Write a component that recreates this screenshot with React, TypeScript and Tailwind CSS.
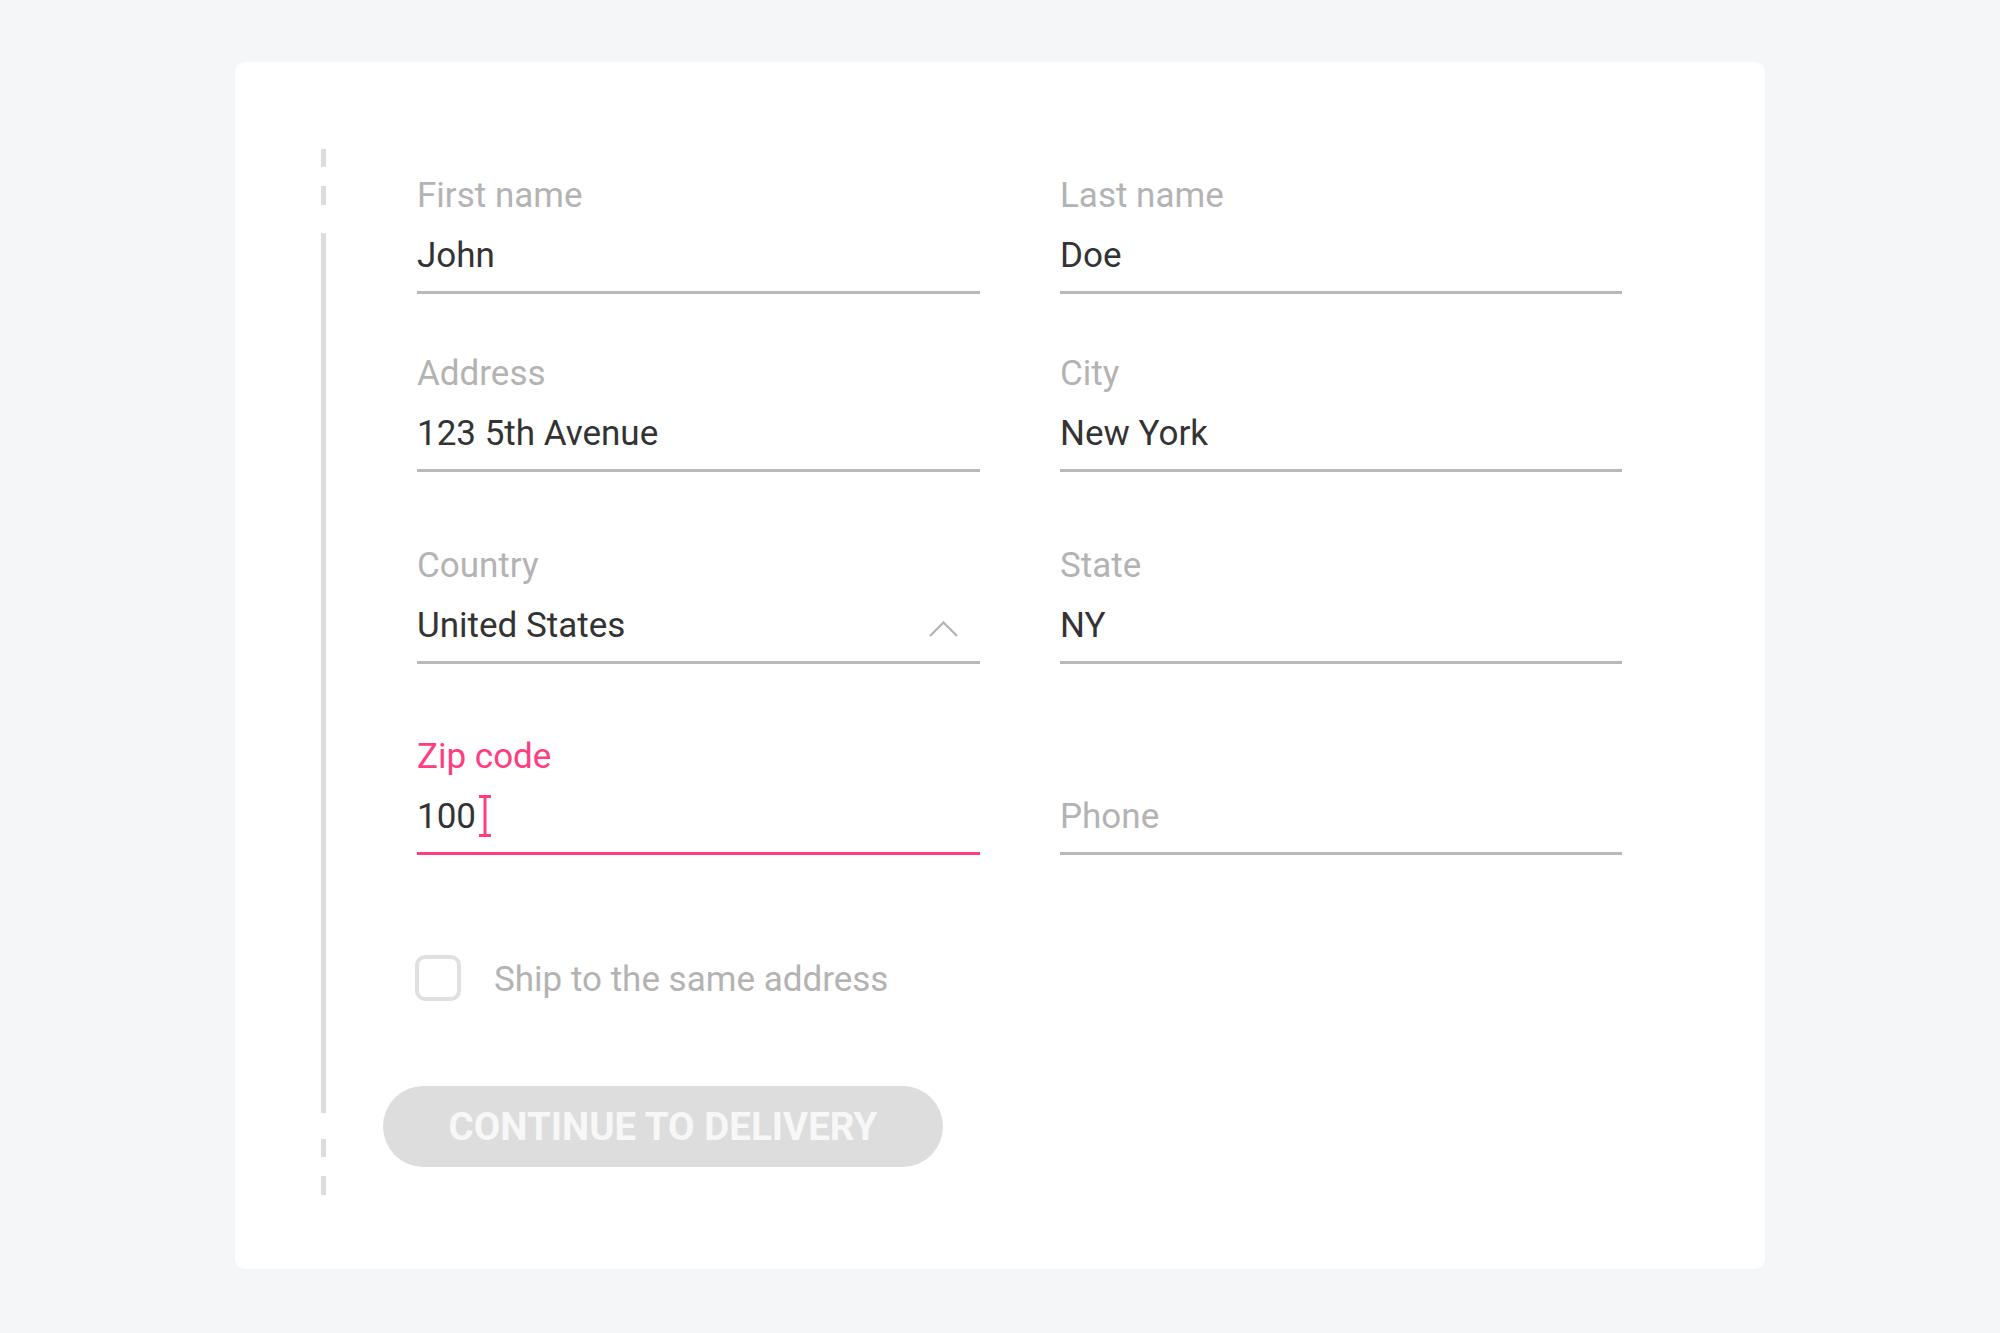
import React from "react";

const font = { fontFamily: "Roboto, 'Noto Sans', sans-serif" };

function Field({
  label,
  value,
  placeholder,
  active,
  chevron,
  cursor,
}: {
  label?: string;
  value?: string;
  placeholder?: string;
  active?: boolean;
  chevron?: boolean;
  cursor?: boolean;
}) {
  return (
    <div className={`flex flex-col border-b-[3px] pb-[15px] ${active ? "border-[#ff3d7f]" : "border-[#b9b9b9]"}`}>
      <div className={`mt-[2px] h-[40px] text-[35px] leading-[40px] ${active ? "text-[#ff3d7f]" : "text-[#b3b3b3]"}`}>
        {label ?? ""}
      </div>
      <div className="mt-[20px] flex h-[40px] items-center justify-between">
        <div className="flex items-center">
          {value ? (
            <span className="text-[35px] leading-[40px] text-[#333333]">{value}</span>
          ) : (
            <span className="text-[35px] leading-[40px] text-[#b3b3b3]">{placeholder}</span>
          )}
          {cursor && (
            <svg width="12" height="42" viewBox="0 0 12 42" className="ml-[3px] -mt-[2px]">
              <line x1="6" y1="1" x2="6" y2="41" stroke="#ff3d7f" strokeWidth="3" />
              <line x1="0" y1="1.5" x2="12" y2="1.5" stroke="#ff3d7f" strokeWidth="3" />
              <line x1="0" y1="40.5" x2="12" y2="40.5" stroke="#ff3d7f" strokeWidth="3" />
            </svg>
          )}
        </div>
        {chevron && (
          <svg width="29" height="16" viewBox="0 0 29 16" className="mr-[22px] mt-[6px]">
            <polyline points="1,15 14.5,1.5 28,15" fill="none" stroke="#b3b3b3" strokeWidth="2.2" />
          </svg>
        )}
      </div>
    </div>
  );
}

export default function App() {
  return (
    <div className="min-h-screen w-full bg-[#f5f6f8] pt-[62px]" style={font}>
      <div className="mx-auto flex h-[1207px] w-[1530px] rounded-[10px] bg-white pl-[86px] pt-[87px] pb-[74px]">
        {/* decoration line */}
        <div className="flex w-[5px] flex-col">
          <div className="h-[18px] bg-[#dcdcdc]" />
          <div className="h-[19px]" />
          <div className="h-[19px] bg-[#dcdcdc]" />
          <div className="h-[28px]" />
          <div className="flex-1 bg-[#dcdcdc]" />
          <div className="h-[26px]" />
          <div className="h-[18px] bg-[#dcdcdc]" />
          <div className="h-[19px]" />
          <div className="h-[19px] bg-[#dcdcdc]" />
        </div>

        <div className="ml-[91px] flex w-[1205px] flex-col pt-[25px]">
          <div className="grid grid-cols-[563px_562px] gap-x-[80px]">
            <Field label="First name" value="John" />
            <Field label="Last name" value="Doe" />
          </div>
          <div className="mt-[58px] grid grid-cols-[563px_562px] gap-x-[80px]">
            <Field label="Address" value="123 5th Avenue" />
            <Field label="City" value="New York" />
          </div>
          <div className="mt-[72px] grid grid-cols-[563px_562px] gap-x-[80px]">
            <Field label="Country" value="United States" chevron />
            <Field label="State" value="NY" />
          </div>
          <div className="mt-[71px] grid grid-cols-[563px_562px] gap-x-[80px]">
            <Field label="Zip code" value="100" active cursor />
            <Field placeholder="Phone" />
          </div>

          <div className="mt-[100px] flex items-center">
            <div className="h-[46px] w-[46px] -ml-[2px] rounded-[10px] border-[4px] border-[#e0e0e0]" />
            <span className="ml-[33px] mt-[3px] text-[35px] leading-[40px] text-[#b3b3b3]">Ship to the same address</span>
          </div>

          <div className="mt-[85px] -ml-[34px]">
            <button className="flex h-[81px] w-[560px] items-center justify-center rounded-full bg-[#dddddd] text-[38.5px] font-bold text-[#f7f7f7]">
              CONTINUE TO DELIVERY
            </button>
          </div>
        </div>
      </div>
    </div>
  );
}
